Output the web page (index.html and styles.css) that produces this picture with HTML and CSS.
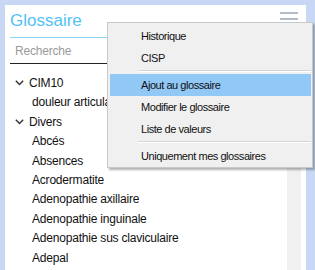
FILE: index.html
```html
<!DOCTYPE html>
<html lang="fr">
<head>
    <meta charset="UTF-8">
    <title>Glossaire</title>
    <link rel="stylesheet" href="styles.css">
</head>
<body>

<div class="panel">
  <div class="head">
    <div class="title">Glossaire</div>
    <div class="burger"><span></span><span></span><span></span></div>
  </div>
  <input type="text" class="search" placeholder="Recherche" />

  <div class="tree-box">
    <div class="tree">
      <div class="row group"><svg class="chev" width="9" height="6" viewBox="0 0 9 6"><polyline points="0.8,0.8 4.5,4.6 8.2,0.8" /></svg>CIM10</div>
      <div class="row leaf">douleur articulaire</div>
      <div class="row group"><svg class="chev" width="9" height="6" viewBox="0 0 9 6"><polyline points="0.8,0.8 4.5,4.6 8.2,0.8" /></svg>Divers</div>
      <div class="row leaf">Abcés</div>
      <div class="row leaf">Absences</div>
      <div class="row leaf">Acrodermatite</div>
      <div class="row leaf">Adenopathie axillaire</div>
      <div class="row leaf">Adenopathie inguinale</div>
      <div class="row leaf">Adenopathie sus claviculaire</div>
      <div class="row leaf">Adepal</div>
    </div>
    <div class="scrollbar"></div>
  </div>
</div>

<!-- context menu opened from the burger button -->
<div class="menu">
  <div class="item">Historique</div>
  <div class="item">CISP</div>
  <div class="sep"></div>
  <div class="item active">Ajout au glossaire</div>
  <div class="item">Modifier le glossaire</div>
  <div class="item">Liste de valeurs</div>
  <div class="sep"></div>
  <div class="item">Uniquement mes glossaires</div>
</div>

</body>
</html>
```

FILE: styles.css
```css
body {
	margin: 0;
	background: #c8d8f4;
	font-family: "Liberation Sans", Arial, sans-serif;
	overflow: hidden;
}
.panel {
	margin: 5px 0 0 5px;
	width: 301px;
	height: 265px;
	background: #fff;
	display: flex;
	flex-direction: column;
}

/* header with title and burger */
.head {
	display: flex;
	justify-content: space-between;
	align-items: flex-start;
	margin: 0 5px;
	padding: 6px 0 6px 0;
	border-bottom: 1px solid #8fd4f6;
}
.title {
	font-size: 17px;
	line-height: 20px;
	color: #52c1f4;
}
.burger {
	display: flex;
	flex-direction: column;
	gap: 4px;
	width: 18px;
	margin: 1px 3px 0 0;
}
.burger span {
	height: 2px;
	background: #b3bdc8;
}

.search {
	box-sizing: border-box;
	margin: 0 5px;
	width: 97px;
	height: 26px;
	padding: 1px 5px 0 5px;
	border: 0;
	border-bottom: 1px solid #222;
	outline: none;
	font-family: inherit;
	font-size: 12px;
	letter-spacing: -0.2px;
	background: transparent;
}
.search::placeholder {
	color: #9a9a9a;
}

/* tree list */
.tree-box {
	flex: 1;
	display: flex;
	padding-right: 5px;
	min-height: 0;
}
.tree {
	flex: 1;
	padding-top: 10px;
	overflow: hidden;
}
.scrollbar {
	width: 14px;
	background: #f0f0f0;
}
.row {
	height: 19.4px;
	line-height: 19.4px;
	font-size: 12px;
	letter-spacing: -0.2px;
	color: #111;
	white-space: nowrap;
}
.group {
	display: flex;
	align-items: center;
	padding-left: 10px;
}
.chev {
	margin-right: 5px;
	margin-top: -1px;
}
.chev polyline {
	fill: none;
	stroke: #333;
	stroke-width: 1.4;
}
.leaf {
	padding-left: 27px;
}

/* context menu */
.menu {
	position: absolute;
	left: 107px;
	top: 22px;
	width: 204px;
	padding: 2px 0 0 0;
	background: #f0f0f0;
	border: 1px solid #c9c9c9;
	box-shadow: 2px 2px 2px rgba(0, 0, 0, 0.3);
	font-size: 11px;
	letter-spacing: -0.45px;
	color: #111;
}
.item {
	height: 22px;
	line-height: 22px;
	margin: 0 1px 0 2px;
	padding-left: 31px;
}
.item.active {
	background: #91c8f6;
}
.sep {
	height: 1px;
	margin: 1px 1px 2px 30px;
	background: #d5d5d5;
	border-bottom: 1px solid #fff;
}
```
